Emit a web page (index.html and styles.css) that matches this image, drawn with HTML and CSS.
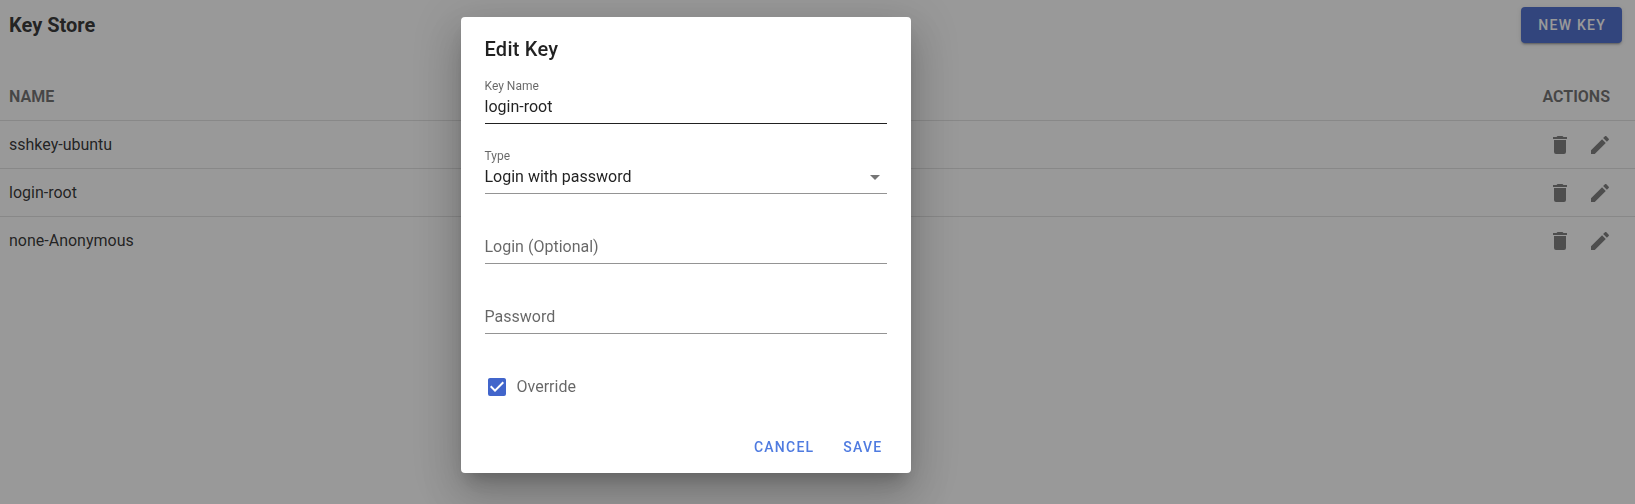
FILE: index.html
```html
<!DOCTYPE html>
<html lang="en">
<head>
<meta charset="utf-8">
<title>Key Store</title>
<link rel="stylesheet" href="styles.css">
</head>
<body>
<svg class="defs" aria-hidden="true">
  <symbol id="trash" viewBox="0 0 24 24"><path d="M19,4H15.5L14.5,3H9.5L8.5,4H5V6H19M6,19A2,2 0 0,0 8,21H16A2,2 0 0,0 18,19V7H6V19Z"/></symbol>
  <symbol id="pencil" viewBox="0 0 24 24"><path d="M20.71,7.04C21.1,6.65 21.1,6 20.71,5.63L18.37,3.29C18,2.9 17.35,2.9 16.96,3.29L15.12,5.12L18.87,8.87M3,17.25V21H6.75L17.81,9.93L14.06,6.18L3,17.25Z"/></symbol>
</svg>
<main class="page">
  <header class="toolbar">
    <h1 class="toolbar-title">Key Store</h1>
    <button class="btn btn-primary">NEW KEY</button>
  </header>
  <div class="table">
    <div class="row row-head"><span>NAME</span><span>ACTIONS</span></div>
    <div class="row"><span>sshkey-ubuntu</span><span class="actions"><svg class="icon"><use href="#trash"/></svg><svg class="icon"><use href="#pencil"/></svg></span></div>
    <div class="row"><span>login-root</span><span class="actions"><svg class="icon"><use href="#trash"/></svg><svg class="icon"><use href="#pencil"/></svg></span></div>
    <div class="row"><span>none-Anonymous</span><span class="actions"><svg class="icon"><use href="#trash"/></svg><svg class="icon"><use href="#pencil"/></svg></span></div>
  </div>
</main>
<div class="overlay">
  <section class="dialog" role="dialog" aria-label="Edit Key">
    <h2 class="dialog-title">Edit Key</h2>
    <div class="field field-strong"><span class="label">Key Name</span><span class="value">login-root</span></div>
    <div class="field"><span class="label">Type</span><span class="value">Login with password<svg class="icon" viewBox="0 0 24 24"><path d="M7,10L12,15L17,10H7Z"/></svg></span></div>
    <div class="field"><span class="label"></span><span class="value placeholder">Login (Optional)</span></div>
    <div class="field"><span class="label"></span><span class="value placeholder">Password</span></div>
    <div class="check"><svg class="icon check-icon" viewBox="0 0 24 24"><path d="M10,17L5,12L6.41,10.58L10,14.17L17.59,6.58L19,8M19,3H5C3.89,3 3,3.89 3,5V19A2,2 0 0,0 5,21H19A2,2 0 0,0 21,19V5C21,3.89 20.1,3 19,3Z"/></svg><span>Override</span></div>
    <footer class="dialog-actions">
      <button class="btn btn-text">CANCEL</button>
      <button class="btn btn-text">SAVE</button>
    </footer>
  </section>
</div>
</body>
</html>
```
FILE: styles.css
```css
* { box-sizing: border-box; }
body {
  margin: 0;
  height: 504px;
  overflow: hidden;
  background: #fff;
  color: rgba(0, 0, 0, .87);
  font: 16px/24px Roboto, sans-serif;
}
h1, h2 { margin: 0; }
.defs { display: none; }
.icon { width: 24px; height: 24px; fill: rgba(0, 0, 0, .54); }

.toolbar {
  display: flex;
  align-items: center;
  justify-content: space-between;
  height: 50px;
  padding: 0 13px 0 9px;
}
.toolbar-title { font-size: 20px; font-weight: 700; line-height: 30px; }

.btn {
  height: 36px;
  border: 0;
  border-radius: 4px;
  font: 500 14px/36px Roboto, sans-serif;
  letter-spacing: .0892857143em;
}
.btn-primary {
  padding: 0 16px 0 17px;
  background: #4165cb;
  color: #fff;
  box-shadow: 0 3px 1px -2px rgba(0,0,0,.2), 0 2px 2px rgba(0,0,0,.14), 0 1px 5px rgba(0,0,0,.12);
}
.btn-text { padding: 0 8px; background: none; color: #4f7be0; }

.table { padding-top: 22px; }
.row {
  display: flex;
  align-items: center;
  justify-content: space-between;
  height: 48px;
  padding: 0 23px 0 9px;
}
.row + .row { border-top: 1px solid rgba(0, 0, 0, .12); }
.row-head { padding-top: 2px; padding-right: 25px; font-weight: 700; color: rgba(0, 0, 0, .6); }
.actions { display: flex; gap: 16px; }

.overlay {
  position: fixed;
  inset: 0;
  padding: 17px 0 0 460.5px;
  background: rgba(33, 33, 33, .46);
}
.dialog {
  display: flex;
  flex-direction: column;
  width: 450px;
  height: 456px;
  padding: 16px 24px 8px;
  border-radius: 4px;
  background: #fff;
  box-shadow: 0 11px 15px -7px rgba(0,0,0,.2), 0 24px 38px 3px rgba(0,0,0,.14), 0 9px 46px 8px rgba(0,0,0,.12);
}
.dialog-title { font-size: 20px; font-weight: 500; line-height: 32px; letter-spacing: .0125em; }
.field {
  display: flex;
  flex-direction: column;
  justify-content: flex-end;
  height: 48px;
  margin: 11px 0;
  border-bottom: 1px solid rgba(0, 0, 0, .42);
}
.field-strong { border-color: rgba(0, 0, 0, .87); }
.label { height: 17px; color: rgba(0, 0, 0, .6); font-size: 12px; line-height: 16px; }
.value { display: flex; justify-content: space-between; height: 28px; line-height: 24px; }
.placeholder, .check { color: rgba(0, 0, 0, .6); }
.check { display: flex; align-items: center; gap: 8px; height: 24px; margin-top: 30px; }
.check-icon { fill: #4165cb; }
.dialog-actions { display: flex; justify-content: flex-end; gap: 13px; margin: auto -4px 0 0; }
```
